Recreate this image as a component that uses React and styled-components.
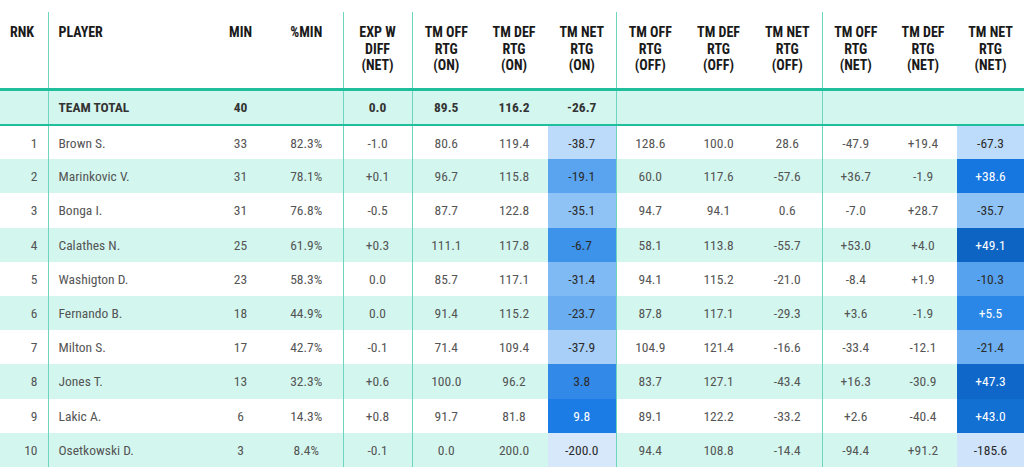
import React from "react";
import styled, { createGlobalStyle } from "styled-components";

const GlobalStyle = createGlobalStyle`
  html, body {
    margin: 0;
    padding: 0;
    background: #ffffff;
  }
  body {
    font-family: "Roboto Condensed", Roboto, "Liberation Sans", sans-serif;
    overflow: hidden;
  }
`;

const teal = "#1fbf9d";
const divider = "#6fd4bd";
const mint = "#d3f7ef";

const columns = [
  { key: "rnk", label: ["RNK"], width: 48 },
  { key: "player", label: ["PLAYER"], width: 163, divider: true },
  { key: "min", label: ["MIN"], width: 59 },
  { key: "pct", label: ["%MIN"], width: 73 },
  { key: "exp", label: ["EXP W", "DIFF", "(NET)"], width: 69, divider: true },
  { key: "offOn", label: ["TM OFF", "RTG", "(ON)"], width: 68, divider: true },
  { key: "defOn", label: ["TM DEF", "RTG", "(ON)"], width: 68 },
  { key: "netOn", label: ["TM NET", "RTG", "(ON)"], width: 68 },
  { key: "offOff", label: ["TM OFF", "RTG", "(OFF)"], width: 68, divider: true },
  { key: "defOff", label: ["TM DEF", "RTG", "(OFF)"], width: 69 },
  { key: "netOff", label: ["TM NET", "RTG", "(OFF)"], width: 69 },
  { key: "offNet", label: ["TM OFF", "RTG", "(NET)"], width: 67, divider: true },
  { key: "defNet", label: ["TM DEF", "RTG", "(NET)"], width: 68 },
  { key: "netNet", label: ["TM NET", "RTG", "(NET)"], width: 67 },
];

// [rnk, player, min, pct, exp, offOn, defOn, [netOn, bg, light], offOff, defOff, netOff, offNet, defNet, [netNet, bg, light]]
const players = [
  [1, "Brown S.", 33, "82.3%", "-1.0", "80.6", "119.4", ["-38.7", "#bcdbfa"], "128.6", "100.0", "28.6", "-47.9", "+19.4", ["-67.3", "#bddbfa"]],
  [2, "Marinkovic V.", 31, "78.1%", "+0.1", "96.7", "115.8", ["-19.1", "#5aa4ef"], "60.0", "117.6", "-57.6", "+36.7", "-1.9", ["+38.6", "#1677e0", true]],
  [3, "Bonga I.", 31, "76.8%", "-0.5", "87.7", "122.8", ["-35.1", "#8fc2f5"], "94.7", "94.1", "0.6", "-7.0", "+28.7", ["-35.7", "#90c3f5"]],
  [4, "Calathes N.", 25, "61.9%", "+0.3", "111.1", "117.8", ["-6.7", "#3d92ea"], "58.1", "113.8", "-55.7", "+53.0", "+4.0", ["+49.1", "#0d64c3", true]],
  [5, "Washigton D.", 23, "58.3%", "0.0", "85.7", "117.1", ["-31.4", "#80baf4"], "94.1", "115.2", "-21.0", "-8.4", "+1.9", ["-10.3", "#57a2ef"]],
  [6, "Fernando B.", 18, "44.9%", "0.0", "91.4", "115.2", ["-23.7", "#6aaef1"], "87.8", "117.1", "-29.3", "+3.6", "-1.9", ["+5.5", "#2a87e7", true]],
  [7, "Milton S.", 17, "42.7%", "-0.1", "71.4", "109.4", ["-37.9", "#a7cff7"], "104.9", "121.4", "-16.6", "-33.4", "-12.1", ["-21.4", "#6eb0f2"]],
  [8, "Jones T.", 13, "32.3%", "+0.6", "100.0", "96.2", ["3.8", "#3389e7"], "83.7", "127.1", "-43.4", "+16.3", "-30.9", ["+47.3", "#0f68c9", true]],
  [9, "Lakic A.", 6, "14.3%", "+0.8", "91.7", "81.8", ["9.8", "#1a7ce4", true], "89.1", "122.2", "-33.2", "+2.6", "-40.4", ["+43.0", "#1270d3", true]],
  [10, "Osetkowski D.", 3, "8.4%", "-0.1", "0.0", "200.0", ["-200.0", "#d7e8fb"], "94.4", "108.8", "-14.4", "-94.4", "+91.2", ["-185.6", "#cfe3fa"]],
];

const team = ["", "TEAM TOTAL", "40", "", "0.0", "89.5", "116.2", "-26.7", "", "", "", "", "", ""];

const Page = styled.div`
  padding-top: 12px;
  width: 1024px;
`;

const Table = styled.table`
  border-collapse: collapse;
  table-layout: fixed;
  width: 1024px;
`;

const HeadCell = styled.th`
  height: 77px;
  box-sizing: border-box;
  padding: 12px 4px 0;
  vertical-align: top;
  text-align: ${(p) => p.$align};
  padding-left: ${(p) => (p.$align === "left" ? "10px" : "4px")};
  font-size: 14px;
  font-weight: 700;
  line-height: 16.5px;
  color: #1a1a1a;
  border-left: ${(p) => (p.$divider ? `1px solid ${divider}` : "none")};
  border-bottom: 3px solid ${teal};
`;

const Row = styled.tr`
  height: 34.2px;
  background: ${(p) => (p.$striped ? mint : "#ffffff")};
`;

const TeamRow = styled.tr`
  height: 36px;
  background: ${mint};
  border-bottom: 2px solid ${teal};
`;

const Cell = styled.td`
  padding: 0 10px;
  text-align: ${(p) => p.$align};
  font-size: 13.5px;
  font-weight: ${(p) => (p.$bold ? 700 : 400)};
  color: ${(p) => (p.$light ? "#ffffff" : p.$bold ? "#333333" : p.$bg ? "#2b2b2b" : "#555555")};
  background: ${(p) => p.$bg || "transparent"};
  border-left: ${(p) => (p.$divider ? `1px solid ${divider}` : "none")};
  white-space: nowrap;
  overflow: hidden;
`;

const headAlign = (i) => (i < 2 ? "left" : "center");
const bodyAlign = (i) => (i === 0 ? "right" : i === 1 ? "left" : "center");

export default function App() {
  return (
    <Page>
      <GlobalStyle />
      <Table>
        <colgroup>
          {columns.map((c) => (
            <col key={c.key} style={{ width: c.width }} />
          ))}
        </colgroup>
        <thead>
          <tr>
            {columns.map((c, i) => (
              <HeadCell key={c.key} $align={headAlign(i)} $divider={c.divider}>
                {c.label.map((line, j) => (
                  <React.Fragment key={j}>
                    {j > 0 && <br />}
                    {line}
                  </React.Fragment>
                ))}
              </HeadCell>
            ))}
          </tr>
        </thead>
        <tbody>
          <TeamRow>
            {team.map((v, i) => (
              <Cell key={i} $bold $align={bodyAlign(i)} $divider={columns[i].divider}>
                {v}
              </Cell>
            ))}
          </TeamRow>
          {players.map((row, r) => (
            <Row key={r} $striped={r % 2 === 1}>
              {row.map((v, i) => {
                const isHeat = Array.isArray(v);
                return (
                  <Cell
                    key={i}
                    $align={bodyAlign(i)}
                    $divider={columns[i].divider}
                    $bg={isHeat ? v[1] : undefined}
                    $light={isHeat && v[2]}
                  >
                    {isHeat ? v[0] : v}
                  </Cell>
                );
              })}
            </Row>
          ))}
        </tbody>
      </Table>
    </Page>
  );
}
